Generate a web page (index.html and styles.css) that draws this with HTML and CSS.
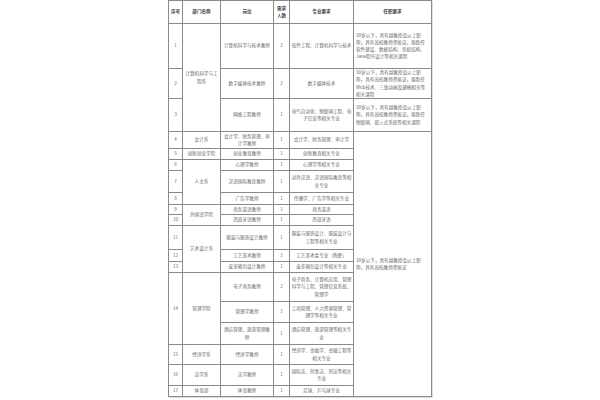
FILE: index.html
```html
<!DOCTYPE html>
<html lang="zh-CN">
<head>
<meta charset="utf-8">
<link rel="stylesheet" href="styles.css">
</head>
<body>
<div class="page">
<table class="sheet">
<colgroup>
<col class="c-no"><col class="c-dept"><col class="c-post"><col class="c-num"><col class="c-major"><col class="c-req">
</colgroup>
<thead>
<tr class="h-head"><th>序号</th><th>部门名称</th><th>岗位</th><th>需求人数</th><th>专业要求</th><th>任职要求</th></tr>
</thead>
<tbody>
<tr class="h-r1"><td>1</td><td rowspan="3">计算机科学与工程系</td><td>计算机科学与技术教师</td><td>2</td><td>软件工程、计算机科学与技术</td><td class="req">30岁以下，具有副教授及以上职称，具有高校教师资格证，能胜任软件建设、数据结构、系统结构、Java程序设计等相关课程</td></tr>
<tr class="h-r2"><td>2</td><td>数字媒体技术教师</td><td>2</td><td>数字媒体技术</td><td class="req">30岁以下，具有副教授及以上职称，具有高校教师资格证，能胜任Web技术、三维动画及建模相关等相关课程</td></tr>
<tr class="h-r3"><td>3</td><td>网络工程教师</td><td>1</td><td>电气自动化、物联网工程、电子信息等相关专业</td><td class="req">30岁以下，具有副教授及以上职称，具有高校教师资格证，能胜任物联网、嵌入式系统等相关课程</td></tr>
<tr class="h-r4"><td>4</td><td>会计系</td><td>会计学、财务管理、审计学教师</td><td>1</td><td>会计学、财务管理、审计学</td><td class="req" rowspan="16">30岁以下，具有副教授及以上职称，具有高校教师资格证</td></tr>
<tr class="h-r5"><td>5</td><td>创新创业学院</td><td>创业教育教师</td><td>1</td><td>创新教育相关专业</td></tr>
<tr class="h-r6"><td>6</td><td rowspan="3">人文系</td><td>心理学教师</td><td>1</td><td>心理学等相关专业</td></tr>
<tr class="h-r7"><td>7</td><td>汉语国际教育教师</td><td>1</td><td>对外汉语、汉语国际教育等相关专业</td></tr>
<tr class="h-r8"><td>8</td><td>广告学教师</td><td>1</td><td>传播学、广告学等相关专业</td></tr>
<tr class="h-r9"><td>9</td><td rowspan="2">外国语学院</td><td>商务英语教师</td><td>1</td><td>商务英语</td></tr>
<tr class="h-r10"><td>10</td><td>西班牙语教师</td><td>1</td><td>西班牙语</td></tr>
<tr class="h-r11"><td>11</td><td rowspan="3">艺术设计系</td><td>服装与服饰设计教师</td><td>1</td><td>服装与服饰设计、服装设计与工程等相关专业</td></tr>
<tr class="h-r12"><td>12</td><td>工艺美术教师</td><td>1</td><td>工艺美术类专业（陶瓷）</td></tr>
<tr class="h-r13"><td>13</td><td>皮革箱包设计教师</td><td>1</td><td>皮革箱包设计等相关专业</td></tr>
<tr class="h-r14a"><td rowspan="3">14</td><td rowspan="3">管理学院</td><td>电子商务教师</td><td>2</td><td>电子商务、计算机应用、管理科学与工程、管理信息系统、管理学</td></tr>
<tr class="h-r14b"><td>管理学教师</td><td>1</td><td>工商管理、人力资源管理、管理学等相关专业</td></tr>
<tr class="h-r14c"><td>酒店管理、旅游管理教师</td><td>1</td><td>酒店管理、旅游管理等相关专业</td></tr>
<tr class="h-r15"><td>15</td><td>经济学系</td><td>经济学教师</td><td>1</td><td>经济学、金融学、金融工程等相关专业</td></tr>
<tr class="h-r16"><td>16</td><td>法学系</td><td>法学教师</td><td>1</td><td>国际法、刑事法、刑法等相关专业</td></tr>
<tr class="h-r17"><td>17</td><td>体育部</td><td>体育教师</td><td>1</td><td>足球、乒乓球专业</td></tr>
</tbody>
</table>
</div>
</body>
</html>
```

FILE: styles.css
```css
html, body {
  margin: 0;
  padding: 0;
  background: #ffffff;
}
.page {
  width: 600px;
  height: 400px;
  overflow: hidden;
  padding-left: 168px;
  box-sizing: border-box;
}
.sheet {
  border-collapse: collapse;
  table-layout: fixed;
  width: 263px;
  font-family: "Noto Sans CJK SC", "Noto Sans", sans-serif;
  font-size: 4.6px;
  line-height: 7.2px;
  color: #6a6a6a;
  box-shadow: 1px 1px 0 #dddddd;
}
.sheet th, .sheet td {
  border: 1px solid #8a8a8a;
  padding: 0 1.5px;
  text-align: center;
  vertical-align: middle;
  overflow: hidden;
}
.sheet th {
  font-weight: 700;
  color: #444444;
}
.sheet td.req {
  text-align: left;
  padding: 0 2px;
}
.c-no { width: 14px; }
.c-dept { width: 38px; }
.c-post { width: 53px; }
.c-num { width: 16px; }
.c-major { width: 64px; }
.c-req { width: 78px; }

.h-head { height: 23px; }
.h-r1 { height: 45px; }
.h-r2 { height: 30px; }
.h-r3 { height: 33px; }
.h-r4 { height: 17px; }
.h-r5 { height: 11px; }
.h-r6 { height: 11px; }
.h-r7 { height: 22px; }
.h-r8 { height: 12px; }
.h-r9 { height: 10px; }
.h-r10 { height: 11px; }
.h-r11 { height: 24px; }
.h-r12 { height: 12px; }
.h-r13 { height: 11px; }
.h-r14a { height: 29px; }
.h-r14b { height: 21px; }
.h-r14c { height: 22px; }
.h-r15 { height: 20px; }
.h-r16 { height: 21px; }
.h-r17 { height: 11px; }
```
